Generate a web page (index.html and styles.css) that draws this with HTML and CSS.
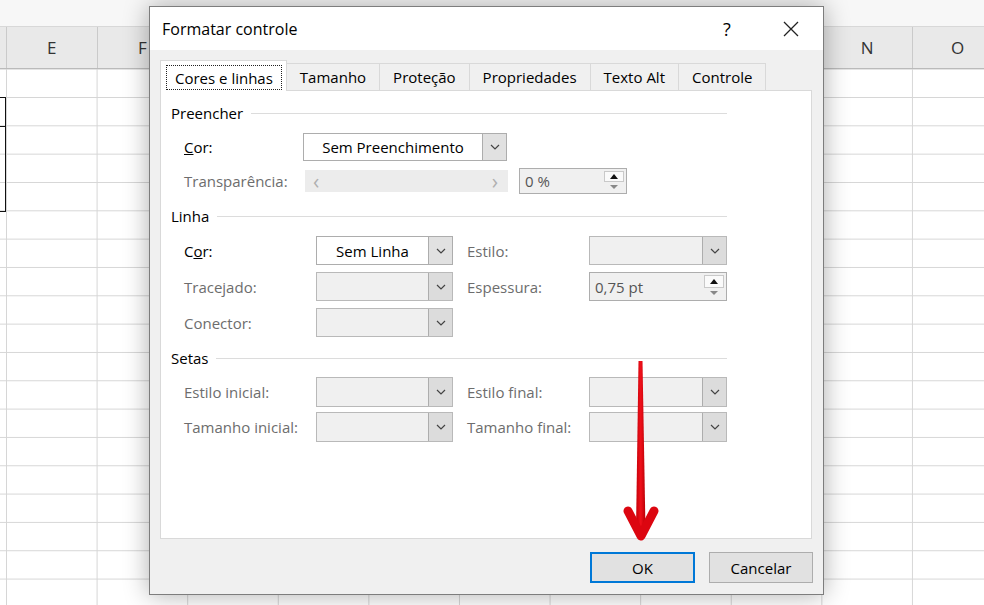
FILE: index.html
```html
<!DOCTYPE html>
<html lang="pt">
	<head>
		<title>Formatar controle</title>
		<meta charset="UTF-8">
		<link rel="stylesheet" href="styles.css">
	</head>
	<body>
		<div class="sheet">
			<div class="sheet-top"></div>
			<div class="col-heads">
				<div class="col-head first"></div>
				<div class="col-head">E</div>
				<div class="col-head">F</div>
				<!-- G to M sit behind the dialog -->
				<div class="col-head"></div>
				<div class="col-head"></div>
				<div class="col-head"></div>
				<div class="col-head"></div>
				<div class="col-head"></div>
				<div class="col-head"></div>
				<div class="col-head"></div>
				<div class="col-head">N</div>
				<div class="col-head">O</div>
			</div>
			<div class="cells">
				<div class="cell-mark">
					<div class="mark-a"></div>
					<div class="mark-b"></div>
				</div>
			</div>
		</div>

		<div class="dialog">
			<div class="titlebar">
				<span class="title">Formatar controle</span>
				<span class="tb-btn help">?</span>
				<span class="tb-btn close">
					<svg width="16" height="16" viewBox="0 0 16 16"><path d="M1 1L15 15M15 1L1 15" stroke="#222" stroke-width="1.3" fill="none"/></svg>
				</span>
			</div>
			<div class="dlg-body">
				<div class="tabs">
					<div class="tab active"><span class="focus">Cores e linhas</span></div>
					<div class="tab">Tamanho</div>
					<div class="tab">Proteção</div>
					<div class="tab">Propriedades</div>
					<div class="tab">Texto Alt</div>
					<div class="tab">Controle</div>
				</div>
				<div class="panel">
					<div class="group fill">
						<div class="group-head">Preencher</div>
						<div class="row">
							<span class="label"><u>C</u>or:</span>
							<div class="combo">
								<span class="combo-text">Sem Preenchimento</span>
								<span class="combo-btn"><svg width="10" height="6" viewBox="0 0 10 6"><path d="M1 1l4 4 4-4" fill="none" stroke="#444" stroke-width="1.2"/></svg></span>
							</div>
						</div>
						<div class="row">
							<span class="label off">Transparência:</span>
							<div class="slider"><span>&lsaquo;</span><span>&rsaquo;</span></div>
							<div class="spin small">
								<span class="spin-text">0 %</span>
								<span class="spin-btns"><span class="up"></span><span class="down"></span></span>
							</div>
						</div>
					</div>

					<div class="group line">
						<div class="group-head">Linha</div>
						<div class="row">
							<span class="label">C<u>o</u>r:</span>
							<div class="combo">
								<span class="combo-text">Sem Linha</span>
								<span class="combo-btn"><svg width="10" height="6" viewBox="0 0 10 6"><path d="M1 1l4 4 4-4" fill="none" stroke="#444" stroke-width="1.2"/></svg></span>
							</div>
							<span class="label2 off">Estilo:</span>
							<div class="combo wide off">
								<span class="combo-text"></span>
								<span class="combo-btn"><svg width="10" height="6" viewBox="0 0 10 6"><path d="M1 1l4 4 4-4" fill="none" stroke="#444" stroke-width="1.2"/></svg></span>
							</div>
						</div>
						<div class="row">
							<span class="label off">Tracejado:</span>
							<div class="combo off">
								<span class="combo-text"></span>
								<span class="combo-btn"><svg width="10" height="6" viewBox="0 0 10 6"><path d="M1 1l4 4 4-4" fill="none" stroke="#444" stroke-width="1.2"/></svg></span>
							</div>
							<span class="label2 off">Espessura:</span>
							<div class="spin wide">
								<span class="spin-text">0,75 pt</span>
								<span class="spin-btns"><span class="up"></span><span class="down"></span></span>
							</div>
						</div>
						<div class="row">
							<span class="label off">Conector:</span>
							<div class="combo off">
								<span class="combo-text"></span>
								<span class="combo-btn"><svg width="10" height="6" viewBox="0 0 10 6"><path d="M1 1l4 4 4-4" fill="none" stroke="#444" stroke-width="1.2"/></svg></span>
							</div>
						</div>
					</div>

					<div class="group line arrows">
						<div class="group-head">Setas</div>
						<div class="row">
							<span class="label off">Estilo inicial:</span>
							<div class="combo off">
								<span class="combo-text"></span>
								<span class="combo-btn"><svg width="10" height="6" viewBox="0 0 10 6"><path d="M1 1l4 4 4-4" fill="none" stroke="#444" stroke-width="1.2"/></svg></span>
							</div>
							<span class="label2 off">Estilo final:</span>
							<div class="combo wide off">
								<span class="combo-text"></span>
								<span class="combo-btn"><svg width="10" height="6" viewBox="0 0 10 6"><path d="M1 1l4 4 4-4" fill="none" stroke="#444" stroke-width="1.2"/></svg></span>
							</div>
						</div>
						<div class="row">
							<span class="label off">Tamanho inicial:</span>
							<div class="combo off">
								<span class="combo-text"></span>
								<span class="combo-btn"><svg width="10" height="6" viewBox="0 0 10 6"><path d="M1 1l4 4 4-4" fill="none" stroke="#444" stroke-width="1.2"/></svg></span>
							</div>
							<span class="label2 off">Tamanho final:</span>
							<div class="combo wide off">
								<span class="combo-text"></span>
								<span class="combo-btn"><svg width="10" height="6" viewBox="0 0 10 6"><path d="M1 1l4 4 4-4" fill="none" stroke="#444" stroke-width="1.2"/></svg></span>
							</div>
						</div>
					</div>
				</div>
				<div class="footer">
					<button class="btn ok">OK</button>
					<button class="btn">Cancelar</button>
				</div>
			</div>
		</div>

		<svg class="arrow" width="55" height="192" viewBox="0 0 55 192">
			<defs>
				<linearGradient id="red" x1="0" y1="0" x2="1" y2="0">
					<stop offset="0" stop-color="#c40008"/>
					<stop offset="0.5" stop-color="#f0101a"/>
					<stop offset="1" stop-color="#b80006"/>
				</linearGradient>
			</defs>
			<polygon points="23.5,6 27.5,6 30.5,176 21,176" fill="url(#red)"/>
			<polyline points="13,156 26,181 39,156" fill="none" stroke="#dc0610" stroke-width="9" stroke-linecap="round" stroke-linejoin="round"/>
		</svg>
	</body>
</html>
```

FILE: styles.css
```css
body{margin:0;width:984px;height:605px;overflow:hidden;background:#fff;position:relative;
	font-family:"Open Sans","Noto Sans",sans-serif;font-size:15px;color:#000;}

/* spreadsheet behind the dialog */
.sheet{height:605px;display:flex;flex-direction:column;}
.sheet-top{height:27px;background:#f7f7f7;border-bottom:1px solid #d8d8d8;box-sizing:border-box;}
.col-heads{display:flex;height:42px;background:#e9e9e9;border-bottom:1px solid #bababa;box-sizing:border-box;}
.col-head{flex:none;width:90.6px;box-sizing:border-box;border-right:1px solid #cacaca;
	display:flex;align-items:center;justify-content:center;font-size:17px;color:#333;}
.col-head.first{width:7px;}
.cells{flex:1;position:relative;
	background-image:linear-gradient(to right,#d6d6d6 1px,transparent 1px),linear-gradient(to bottom,#d6d6d6 1px,transparent 1px);
	background-size:90.6px 28.33px;background-position:6px 28px;}
.cell-mark{position:absolute;left:-2px;top:28px;width:8px;}
.mark-a{height:28px;border:1px solid #111;border-bottom:none;}
.mark-b{height:84px;border:1px solid #111;}

/* dialog */
.dialog{position:absolute;left:149px;top:6px;width:675px;height:589px;box-sizing:border-box;
	border:1px solid #7d7d7d;background:#f0f0f0;box-shadow:0 0 24px rgba(0,0,0,.32);
	display:flex;flex-direction:column;}
.titlebar{height:43px;background:#fff;display:flex;align-items:center;padding-left:12px;flex:none;}
.title{flex:1;font-size:16px;line-height:20px;}
.tb-btn{width:46px;height:43px;display:flex;align-items:center;justify-content:center;}
.tb-btn.help{font-size:18px;margin-right:18px;}
.tb-btn.close{margin-right:9px;}
.dlg-body{flex:1;padding:10px 11px 0 10px;display:flex;flex-direction:column;}

.tabs{display:flex;align-items:flex-end;height:31px;margin-bottom:-1px;position:relative;z-index:1;}
.tab{height:27px;margin-bottom:1px;box-sizing:border-box;border:1px solid #d9d9d9;border-bottom:none;
	margin-left:-1px;padding:0 13px;display:flex;align-items:center;background:#f0f0f0;}
.tab.active{height:31px;margin:0;background:#fff;padding:4px 4px 1px 5px;align-items:stretch;}
.focus{border:1px dotted #222;padding:0 8px;display:flex;align-items:center;}

.panel{height:449px;box-sizing:border-box;background:#fff;border:1px solid #d9d9d9;padding:12px 84px 0 10px;}
.group-head{display:flex;align-items:center;height:20px;}
.group-head::after{content:"";flex:1;height:1px;background:#dcdcdc;margin-left:8px;}
.group + .group{margin-top:11px;}

.row{display:flex;align-items:center;height:29px;margin-top:7px;padding-left:13px;}
.group-head + .row{margin-top:10px;}
.fill .row{height:28px;}
.fill .row + .row{margin-top:6px;}
.arrows .row{height:30px;}
.arrows .group-head + .row{margin-top:9px;}
.arrows .row + .row{margin-top:5px;}

.label{flex:none;width:119px;white-space:nowrap;}
.line .label{width:132px;}
.label2{flex:none;width:122px;margin-left:14px;white-space:nowrap;}
.off{color:#6d6d6d;}

.combo{flex:none;width:204px;height:100%;box-sizing:border-box;display:flex;border:1px solid #adadad;background:#fff;}
.line .combo{width:137px;}
.line .combo.wide{width:138px;}
.combo.off{background:#f0f0f0;border-color:#b9b9b9;}
.combo-text{flex:1;display:flex;align-items:center;justify-content:center;}
.combo-btn{width:23px;background:#e1e1e1;border-left:1px solid #adadad;display:flex;align-items:center;justify-content:center;}
.combo.off .combo-btn{background:#dcdcdc;}

.slider{flex:none;width:203px;height:22px;margin-left:2px;box-sizing:border-box;background:#ececec;
	display:flex;align-items:center;justify-content:space-between;padding:0 10px 0 8px;color:#b0b0b0;font-size:21px;}
.spin{flex:none;height:100%;box-sizing:border-box;display:flex;border:1px solid #adadad;background:#f0f0f0;}
.spin.small{width:108px;height:26px;margin-left:11px;}
.spin.wide{width:138px;}
.spin-text{flex:1;display:flex;align-items:center;padding-left:5px;color:#555;}
.spin-btns{width:20px;margin:2px 2px 2px 0;display:flex;flex-direction:column;}
.spin-btns span{flex:1;display:flex;align-items:center;justify-content:center;}
.spin-btns span::after{content:"";border-left:4px solid transparent;border-right:4px solid transparent;}
.spin-btns .up{background:#fafafa;border:1px solid #c9c9c9;}
.spin-btns .up::after{border-bottom:5px solid #111;}
.spin-btns .down::after{border-top:4px solid #888;}

.footer{display:flex;justify-content:flex-end;gap:14px;margin:13px -1px 0 0;}
.btn{width:104px;height:31px;box-sizing:border-box;border:1px solid #adadad;background:#e1e1e1;
	font-family:inherit;font-size:15px;color:#000;padding:0;}
.btn.ok{width:105px;border:2px solid #0078d7;}

.arrow{position:absolute;left:615px;top:355px;}
```
